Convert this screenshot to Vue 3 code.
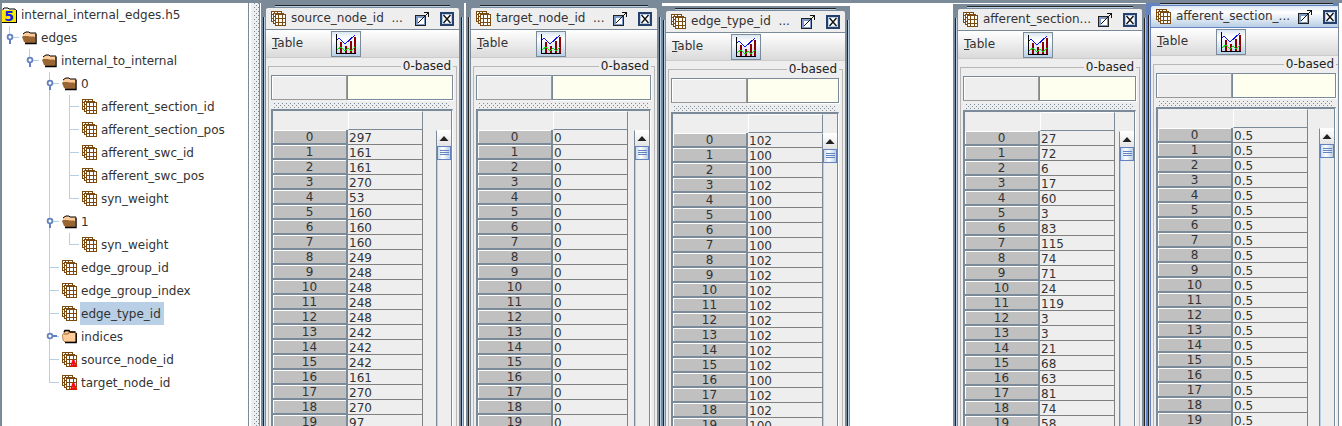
<script setup>
const tree = [
  { label: 'internal_internal_edges.h5', icon: 'file', guides: [] },
  { label: 'edges', icon: 'open', guides: ['last'], handle: 'open' },
  { label: 'internal_to_internal', icon: 'open', guides: ['', 'last'], handle: 'open' },
  { label: '0', icon: 'open', guides: ['', '', 'tee'], handle: 'open' },
  { label: 'afferent_section_id', icon: 'data', guides: ['', '', 'pass', 'tee'] },
  { label: 'afferent_section_pos', icon: 'data', guides: ['', '', 'pass', 'tee'] },
  { label: 'afferent_swc_id', icon: 'data', guides: ['', '', 'pass', 'tee'] },
  { label: 'afferent_swc_pos', icon: 'data', guides: ['', '', 'pass', 'tee'] },
  { label: 'syn_weight', icon: 'data', guides: ['', '', 'pass', 'last'] },
  { label: '1', icon: 'open', guides: ['', '', 'tee'], handle: 'open' },
  { label: 'syn_weight', icon: 'data', guides: ['', '', 'pass', 'last'] },
  { label: 'edge_group_id', icon: 'data', guides: ['', '', 'tee'] },
  { label: 'edge_group_index', icon: 'data', guides: ['', '', 'tee'] },
  { label: 'edge_type_id', icon: 'data', guides: ['', '', 'tee'], selected: true },
  { label: 'indices', icon: 'closed', guides: ['', '', 'tee'], handle: 'closed' },
  { label: 'source_node_id', icon: 'attr', guides: ['', '', 'tee'] },
  { label: 'target_node_id', icon: 'attr', guides: ['', '', 'last'] },
]

const frames = [
  {
    title: 'source_node_id  ...', x: 1, y: 0, w: 203,
    values: [297, 161, 161, 270, 53, 160, 160, 160, 249, 248, 248, 248, 248, 242, 242, 242, 161, 270, 270, 97],
  },
  { title: 'target_node_id  ...', x: 206, y: 0, w: 196, values: Array(20).fill(0) },
  {
    title: 'edge_type_id  ...', x: 401, y: 3, w: 189,
    values: [102, 100, 100, 102, 100, 100, 100, 100, 102, 102, 102, 102, 102, 102, 102, 102, 100, 102, 102, 100],
  },
  {
    title: 'afferent_section...', x: 693, y: 1, w: 194,
    values: [27, 72, 6, 17, 60, 3, 83, 115, 74, 71, 24, 119, 3, 3, 21, 68, 63, 81, 74, 58],
  },
  { title: 'afferent_section_...', x: 886, y: -2, w: 201, active: true, values: Array(20).fill('0.5') },
]
</script>

<template>
  <div class="app">
    <svg class="defs" width="0" height="0" aria-hidden="true">
      <defs>
        <pattern id="grip" width="4" height="4" patternUnits="userSpaceOnUse">
          <rect width="1" height="1" fill="#7a8a99" />
          <rect x="2" y="2" width="1" height="1" fill="#7a8a99" />
        </pattern>
        <symbol id="dataset" viewBox="0 0 16 16">
          <g fill="#fff" stroke="#7a4a10" shape-rendering="crispEdges">
            <path d="M.5 .5h10v10h-10zM3.5 .5v10M6.5 .5v10M.5 3.5h10M.5 7.5h10" />
            <path d="M2.5 2.5h10v10h-10zM2.5 5.5h10M2.5 9.5h10M5.5 2.5v10M9.5 2.5v10" />
            <path d="M4.5 3.5h10v11h-10zM7.5 3.5v11M11.5 3.5v11M4.5 7.5h10M4.5 11.5h10" />
          </g>
        </symbol>
      </defs>
    </svg>

    <nav class="tree" aria-label="File contents">
      <ul>
        <li v-for="(row, i) in tree" :key="i">
          <span v-for="(g, k) in row.guides" :key="k" class="guide" :class="g">
            <svg v-if="row.handle && k === row.guides.length - 1" class="handle" width="20" height="23" viewBox="0 0 20 23">
              <path :d="row.handle === 'open' ? 'M8 13v5' : 'M10 11h5'" stroke="#6382bf" stroke-width="2" />
              <circle cx="8" cy="11" r="2.4" fill="#fff" stroke="#6382bf" stroke-width="1.8" />
            </svg>
          </span>
          <svg v-if="row.icon === 'file'" class="icon" width="16" height="16" viewBox="0 0 16 16">
            <path d="M1 4V2l1-1h4l1 1h6l1 2" fill="#fff" stroke="#000" />
            <path d="M0 3h15v13H0z" fill="#000" />
            <path d="M0 3h14v12H0z" fill="#ffe800" />
            <text x="7" y="14" text-anchor="middle" font-family="DejaVu Sans, sans-serif" font-weight="bold" font-size="14" fill="#1020f0">5</text>
          </svg>
          <svg v-else-if="row.icon === 'open'" class="icon" width="16" height="16" viewBox="0 0 16 16">
            <path d="M1 6V4l2-2h3l1 1h7v9l-1 1z" fill="#ffcc99" />
            <path d="M1 4l2-1.500 1-.500h3l1 1h6" fill="none" stroke="#000" />
            <path d="M0 7l1-1h5l1 .500h5l1 1v5.500H4L2 12z" fill="#996633" />
            <path d="M3 13.500h11V3.500" fill="none" stroke="#000" stroke-width="1.400" />
          </svg>
          <svg v-else-if="row.icon === 'closed'" class="icon" width="16" height="16" viewBox="0 0 16 16">
            <path d="M.5 6l2-3 1-1h3l1 1h6l.5 1v9H3l-2-2z" fill="#ffcc99" stroke="#c08850" />
            <path d="M2 3l1-1.500h4L8 3h5.500M14.200 4v9.500H3" fill="none" stroke="#000" stroke-width="1.400" />
            <path d="M2 5h4l1-2" fill="none" stroke="#996633" />
          </svg>
          <svg v-else class="icon" width="16" height="16" viewBox="0 0 16 16">
            <use href="#dataset" />
            <text v-if="row.icon === 'attr'" x="8" y="15" font-family="DejaVu Sans, sans-serif" font-weight="bold" font-size="9" fill="#f00">A</text>
          </svg>
          <span class="label" :class="{ selected: row.selected }">{{ row.label }}</span>
        </li>
      </ul>
    </nav>
    <div class="splitter"><svg width="5" height="100%"><rect width="5" height="100%" fill="url(#grip)" /></svg></div>

    <main class="desktop">
      <section
        v-for="(f, n) in frames" :key="n" class="frame" :class="{ active: f.active }"
        :style="{ left: f.x + 'px', top: f.y + 'px', width: f.w + 'px' }"
      >
        <header class="title">
          <svg class="title-icon" width="16" height="16"><use href="#dataset" /></svg>
          <h2>{{ f.title }}</h2>
          <button class="max" aria-label="Maximize">
            <svg width="14" height="14" viewBox="0 0 14 14" shape-rendering="crispEdges">
              <path d="M1.500 4.500h8v8h-8z" fill="#fff" stroke="#7f9cc8" stroke-width="2" />
              <path d="M.5 3.500h10v10h-10z" fill="none" stroke="#222" />
              <path d="M3 11l10-10M9 .500h4.500v4.500" fill="none" stroke="#111" />
            </svg>
          </button>
          <button class="close" aria-label="Close">
            <svg width="14" height="14" viewBox="0 0 14 14">
              <path d="M1 1h12v12H1z" fill="#fff" stroke="#26406c" stroke-width="2" />
              <path d="M2.500 2.500h9v9h-9z" fill="none" stroke="#b8cfe5" />
              <path d="M3.500 3l7 8M10.500 3l-7 8" stroke="#111" stroke-width="1.400" />
            </svg>
          </button>
        </header>
        <div class="menubar">
          <button class="menu"><u>T</u>able</button>
          <button class="chart" aria-label="Line plot">
            <svg width="20" height="20" viewBox="0 0 20 20" shape-rendering="crispEdges">
              <path d="M5 8v11M10 12v7M15 7v12M19 3v16" stroke="#8b0000" stroke-width="2" />
              <path d="M.5 0v19.500h19.500" fill="none" stroke="#000" />
              <path d="M1 6l2-2 6 6 10-9" fill="none" stroke="#1010e8" />
              <path d="M1 16l4-3 4 4 3-3 3 3 4-4" fill="none" stroke="#00e800" />
            </svg>
          </button>
        </div>
        <div class="body">
          <fieldset>
            <legend>0-based</legend>
            <div class="fields">
              <input class="cell-name" type="text" readonly aria-label="Selected cell">
              <input class="cell-value" type="text" aria-label="Cell value">
            </div>
            <div class="grip"><svg width="100%" height="5"><rect width="100%" height="5" fill="url(#grip)" /></svg></div>
            <div class="view">
              <table>
                <thead><tr><td></td><td class="column"></td></tr></thead>
                <tbody>
                  <tr v-for="(v, i) in f.values" :key="i"><th scope="row">{{ i }}</th><td>{{ v }}</td></tr>
                </tbody>
              </table>
              <div class="rest"></div>
              <div class="scroll">
                <div class="corner"></div>
                <button class="up" aria-label="Scroll up">
                  <svg width="10" height="5" viewBox="0 0 10 5"><path d="M5 0l4.500 5h-9z" fill="#222" /></svg>
                </button>
                <div class="track"><div class="thumb"></div></div>
              </div>
            </div>
          </fieldset>
        </div>
      </section>
    </main>
  </div>
</template>

<style>
body {
  margin: 0;
  background: #fff;
}
</style>

<style scoped>
.app {
  box-sizing: border-box;
  height: 100vh;
  display: flex;
  padding-right: 3px;
  border-top: 3px solid #7a8a99;
  border-left: 2px solid #7a8a99;
  background: #fff;
  color: #333;
  font: 12px/15px "DejaVu Sans", sans-serif;
  overflow: hidden;
}
.defs {
  position: absolute;
}
.tree {
  flex: none;
  width: 246px;
  border-right: 1px solid #7a8a99;
}
ul {
  list-style: none;
  margin: 0;
  padding: 0;
}
li {
  display: flex;
  align-items: center;
  height: 23px;
}
.icon {
  flex: none;
  margin-right: 2px;
}
.label {
  line-height: 21px;
  padding: 2px 3px 0 1px;
}
.label.selected {
  background: #b8cfe5;
}
.guide {
  flex: none;
  width: 20px;
  height: 23px;
  background-repeat: no-repeat;
}
.pass {
  background-image: linear-gradient(#b8cfe5, #b8cfe5);
  background-size: 1px 23px;
  background-position: 7px 0;
}
.tee {
  background-image: linear-gradient(#b8cfe5, #b8cfe5), linear-gradient(#b8cfe5, #b8cfe5);
  background-size: 1px 23px, 10px 1px;
  background-position: 7px 0, 7px 11px;
}
.last {
  background-image: linear-gradient(#b8cfe5, #b8cfe5), linear-gradient(#b8cfe5, #b8cfe5);
  background-size: 1px 12px, 10px 1px;
  background-position: 7px 0, 7px 11px;
}
.handle {
  display: block;
}
.splitter {
  flex: none;
  box-sizing: border-box;
  width: 11px;
  padding-left: 3px;
  border-left: 2px solid #fff;
  border-right: 1px solid #7a8a99;
  background: #eee;
}
.splitter svg {
  display: block;
}
.desktop {
  flex: 1;
  position: relative;
  overflow: hidden;
  border-right: 1px solid #7a8a99;
}
.frame {
  --edge: #7a8a99;
  position: absolute;
  box-sizing: border-box;
  padding: 5px;
  background:
    linear-gradient(#222, #222) 14px 2px / calc(100% - 28px) 1px no-repeat,
    linear-gradient(#b8cfe5, #b8cfe5) 14px 3px / calc(100% - 28px) 1px no-repeat,
    linear-gradient(#222, #222) 2px 14px / 1px 100% no-repeat,
    linear-gradient(#b8cfe5, #b8cfe5) 3px 14px / 1px 100% no-repeat,
    linear-gradient(#222, #222) right 2px top 14px / 1px 100% no-repeat,
    linear-gradient(#b8cfe5, #b8cfe5) right 1px top 14px / 1px 100% no-repeat,
    var(--edge);
}
.frame.active {
  --edge: #6382bf;
}
.title {
  box-sizing: border-box;
  height: 22px;
  display: flex;
  align-items: center;
  padding: 0 5px;
  border-bottom: 1px solid var(--edge);
  border-radius: 2px 2px 0 0;
  background: #eee;
}
.active .title {
  background: linear-gradient(#dbe7f3, #fff 30%, #b8cfe5);
}
.title-icon {
  flex: none;
  margin-right: 4px;
}
h2 {
  flex: 1;
  min-width: 0;
  margin: 0;
  font-size: 12px;
  font-weight: normal;
  line-height: 21px;
  white-space: pre;
}
button {
  padding: 0;
  border: 0;
  background: none;
  color: inherit;
  font: inherit;
}
.title button {
  flex: none;
  width: 14px;
  height: 14px;
}
.title svg,
.chart svg {
  display: block;
}
.title .max {
  margin-right: 11px;
}
.menubar {
  box-sizing: border-box;
  height: 28px;
  padding-left: 6px;
  display: flex;
  align-items: center;
  border-bottom: 1px solid #ccc;
  background: linear-gradient(#fff, #dadada);
}
.menu {
  width: 59px;
  text-align: left;
}
.chart {
  box-sizing: border-box;
  width: 30px;
  height: 26px;
  padding: 2px 4px;
  border: 1px solid #7a8a99;
  background: linear-gradient(#dbe7f3, #fff 30%, #b8cfe5);
}
.body {
  padding: 1px 2px 0;
  background: #eee;
}
fieldset {
  min-width: 0;
  margin: 0;
  padding: 2px 3px 0 2px;
  border: 1px solid #b8b8b8;
  border-bottom: 0;
}
legend {
  margin-left: auto;
  padding: 0 2px;
  line-height: 14px;
  color: #222;
}
.fields {
  display: flex;
  height: 25px;
}
input {
  box-sizing: border-box;
  min-width: 0;
  height: 25px;
  margin: 0;
  padding: 0 2px;
  border: 1px solid #7a8a99;
  border-radius: 0;
  font: inherit;
}
.cell-name {
  width: 76px;
  background: #eee;
  border-right-color: #999;
  border-bottom-color: #999;
  box-shadow: inset 1px 1px #fff;
}
.cell-value {
  flex: 1;
  background: #fffff0;
  box-shadow: 1px 1px #fff;
}
.grip {
  padding: 3px 3px 1px;
}
.grip svg {
  display: block;
}
.view {
  display: flex;
  border: 2px solid #7a8a99;
  border-right: 1px solid #fff;
  border-bottom: 0;
}
table {
  flex: none;
  width: 150px;
  table-layout: fixed;
  border-collapse: separate;
  border-spacing: 0;
}
td,
th {
  box-sizing: border-box;
  height: 15px;
  padding: 2px 0 0;
  line-height: 11px;
  font-weight: normal;
}
thead td {
  height: 19px;
}
thead .column {
  border-left: 1px solid #fff;
  border-top: 1px solid #fff;
  border-right: 1px solid #7a8a99;
  border-bottom: 1px solid #7a8a99;
}
th {
  border: solid #7a8a99;
  border-width: 0 2px 2px 0;
  background: silver;
  box-shadow: inset 1px 1px #fff;
  text-align: center;
}
tbody td {
  padding-left: 1px;
  border-right: 1px solid #808080;
  border-bottom: 1px solid #808080;
}
.rest {
  flex: 1;
}
.scroll {
  flex: none;
  box-sizing: border-box;
  width: 16px;
  margin-left: -1px;
  display: flex;
  flex-direction: column;
  border-right: 1px solid #7a8a99;
}
.corner {
  height: 19px;
}
.up {
  box-sizing: border-box;
  height: 16px;
  display: flex;
  align-items: center;
  justify-content: center;
  border-left: 1px solid #7a8a99;
  border-top: 1px solid #fff;
  background: linear-gradient(#fff, #e4e4e4);
}
.track {
  flex: 1;
  border-left: 1px solid #7a8a99;
  box-shadow: inset 1px 0 #b8cfe5;
}
.thumb {
  box-sizing: border-box;
  height: 14px;
  border: 1px solid #6382bf;
  background:
    linear-gradient(#6382bf, #6382bf) 50% 3px / 9px 1px no-repeat,
    linear-gradient(#6382bf, #6382bf) 50% 5px / 9px 1px no-repeat,
    linear-gradient(#6382bf, #6382bf) 50% 7px / 9px 1px no-repeat,
    linear-gradient(90deg, #c8dcf0, #fff 40%, #b8cfe5);
}
</style>
